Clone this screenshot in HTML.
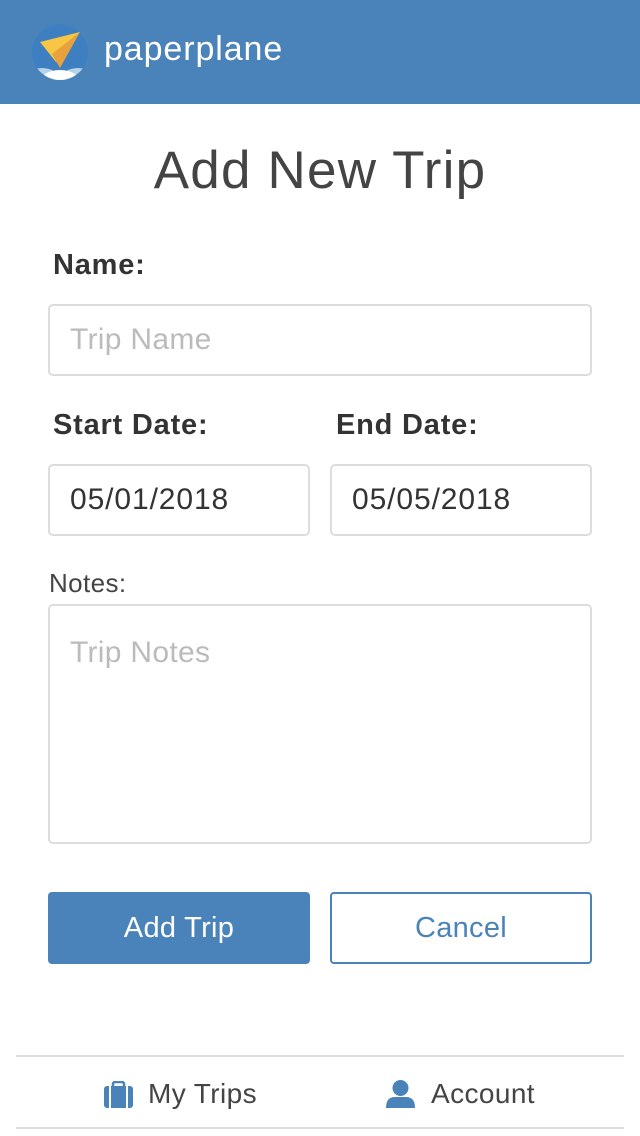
<!DOCTYPE html>
<html><head><meta charset="utf-8"><style>
*{box-sizing:border-box;margin:0;padding:0}
body{width:640px;height:1136px;background:#fff;font-family:"Liberation Sans",sans-serif;color:#333;position:relative;overflow:hidden}
.hdr{position:absolute;left:0;top:0;width:640px;height:104px;background:#4a83ba}
.hdr .t{position:absolute;left:104px;top:30px;font-size:34px;color:#fff;letter-spacing:0.9px}
.ab{position:absolute}
h1{position:absolute;top:140px;width:640px;text-align:center;font-weight:normal;font-size:53px;color:#444;letter-spacing:1.2px}
.lbl{position:absolute;font-weight:bold;font-size:29px;color:#333;letter-spacing:0.8px}
.box{position:absolute;border:2px solid #ddd;border-radius:5px;font-size:30px;padding-left:20px;display:flex;align-items:center;letter-spacing:0.9px}
.ph{color:#bbb;letter-spacing:0.3px}
.btn{position:absolute;top:892px;height:72px;width:262px;border-radius:4px;display:flex;align-items:center;justify-content:center;font-size:29px;letter-spacing:0.3px}
.line{position:absolute;left:16px;width:608px;height:2px;background:#ddd}
.ft{position:absolute;top:1078px;font-size:28px;color:#444;letter-spacing:0.4px}
</style></head><body>
<div class="hdr">
<svg class="ab" style="left:32px;top:24px" width="56" height="56" viewBox="0 0 56 56">
<defs><clipPath id="c"><circle cx="28" cy="28" r="28"/></clipPath></defs>
<g clip-path="url(#c)"><rect width="56" height="56" fill="#3d7fc1"/>
<ellipse cx="10" cy="54" rx="16" ry="10" fill="#b8d2ea"/><ellipse cx="46" cy="54" rx="16" ry="10" fill="#b8d2ea"/>
<ellipse cx="28" cy="58" rx="20" ry="12" fill="#fff"/></g>
<polygon points="8,18 48,8 24,38" fill="#f6c644"/><polygon points="20,30 48,8 28,44" fill="#e9a23b"/>
</svg>
<div class="t">paperplane</div></div>
<h1>Add New Trip</h1>
<div class="lbl" style="left:53px;top:249px">Name:</div>
<div class="box" style="left:48px;top:304px;width:544px;height:72px"><span class="ph">Trip Name</span></div>
<div class="lbl" style="left:53px;top:409px">Start Date:</div>
<div class="lbl" style="left:336px;top:409px">End Date:</div>
<div class="box" style="left:48px;top:464px;width:262px;height:72px">05/01/2018</div>
<div class="box" style="left:330px;top:464px;width:262px;height:72px">05/05/2018</div>
<div class="ab" style="left:49px;top:568px;font-size:26px;color:#444;letter-spacing:0.4px">Notes:</div>
<div class="box" style="left:48px;top:604px;width:544px;height:240px;align-items:flex-start;padding-top:30px"><span class="ph">Trip Notes</span></div>
<div class="btn" style="left:48px;background:#4a83ba;color:#fff">Add Trip</div>
<div class="btn" style="left:330px;border:2px solid #4a83ba;color:#4a83ba">Cancel</div>
<div class="line" style="top:1055px"></div>
<div class="line" style="top:1127px"></div>
<svg class="ab" style="left:104px;top:1081px" width="29" height="27" viewBox="0 0 29 27"><rect x="9" y="1" width="11" height="6" rx="2" fill="none" stroke="#4a83ba" stroke-width="2.5"/><rect x="0" y="5" width="29" height="22" rx="3" fill="#4a83ba"/><rect x="5" y="5" width="2" height="22" fill="#fff"/><rect x="22" y="5" width="2" height="22" fill="#fff"/></svg>
<div class="ft" style="left:148px">My Trips</div>
<svg class="ab" style="left:386px;top:1080px" width="29" height="28" viewBox="0 0 29 28"><circle cx="14.5" cy="8" r="8" fill="#4a83ba"/><path d="M0 28 Q0 17 9 17 L20 17 Q29 17 29 28Z" fill="#4a83ba"/></svg>
<div class="ft" style="left:431px">Account</div>
</body></html>
